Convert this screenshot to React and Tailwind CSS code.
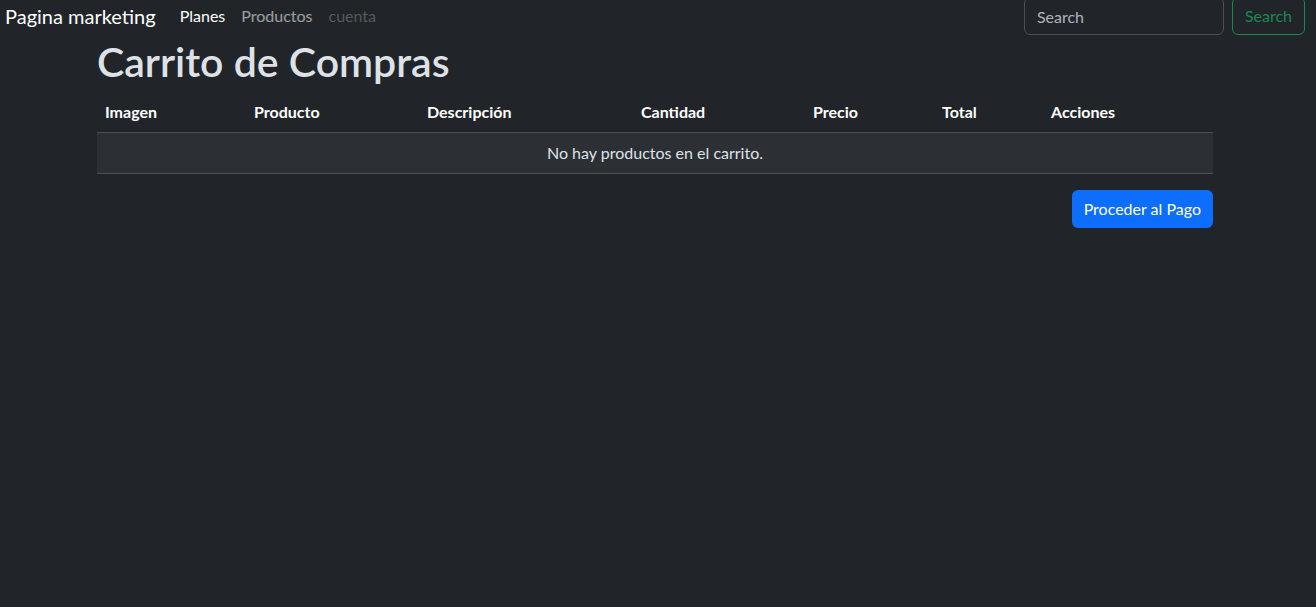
import React from 'react';

const columns = [
    { label: 'Imagen', width: 'w-[149px]' },
    { label: 'Producto', width: 'w-[173px]' },
    { label: 'Descripción', width: 'w-[214px]' },
    { label: 'Cantidad', width: 'w-[172px]' },
    { label: 'Precio', width: 'w-[129px]' },
    { label: 'Total', width: 'w-[109px]' },
    { label: 'Acciones', width: 'w-[170px]' },
];

const Navbar = () => {
    return (
        <nav className="flex h-[35px] items-end justify-between">
            <div className="flex h-full items-center pb-[3px]">
                <a className="ml-[5px] mr-[16px] text-[20px] leading-[30px] text-white">Pagina marketing</a>
                <ul className="flex items-center">
                    <li className="px-2 text-white">Planes</li>
                    <li className="px-2 text-white/55">Productos</li>
                    <li className="px-2 text-white/25">cuenta</li>
                </ul>
            </div>
            <form className="mr-[11px] flex items-end gap-2">
                <input
                    type="search"
                    placeholder="Search"
                    className="h-[38px] w-[200px] rounded-md border border-[#495057] bg-[#212529] px-3 text-[#dee2e6] placeholder:text-[#adb5bd] outline-none"
                />
                <button className="h-[38px] rounded-md border border-[#198754] px-3 text-[#198754]">
                    Search
                </button>
            </form>
        </nav>
    );
};

const App = () => {
    return (
        <div className="min-h-[607px] bg-[#212529] text-[#dee2e6] font-['Lato',sans-serif] text-[16px] leading-6">
            <Navbar />
            <div className="ml-[85px] w-[1140px] px-3">
                {/* Title */}
                <h1 className="mt-[3px] mb-[6px] text-[41px] font-semibold leading-[48px] text-[#dee2e6]">Carrito de Compras</h1>
                <table className="w-full table-fixed border-collapse mb-4">
                    <thead>
                        <tr className="border-b border-[#495057]">
                            {columns.map((c) => (
                                <th key={c.label} className={`${c.width} p-2 text-left font-bold text-white`}>
                                    {c.label}
                                </th>
                            ))}
                        </tr>
                    </thead>
                    <tbody>
                        <tr className="border-b border-[#495057] bg-[#2c3034]">
                            <td colSpan={7} className="p-2 text-center">No hay productos en el carrito.</td>
                        </tr>
                    </tbody>
                </table>
                <div className="flex justify-end">
                    <button className="h-[38px] rounded-md bg-[#0d6efd] px-3 text-white">Proceder al Pago</button>
                </div>
            </div>
        </div>
    );
};

export default App;
